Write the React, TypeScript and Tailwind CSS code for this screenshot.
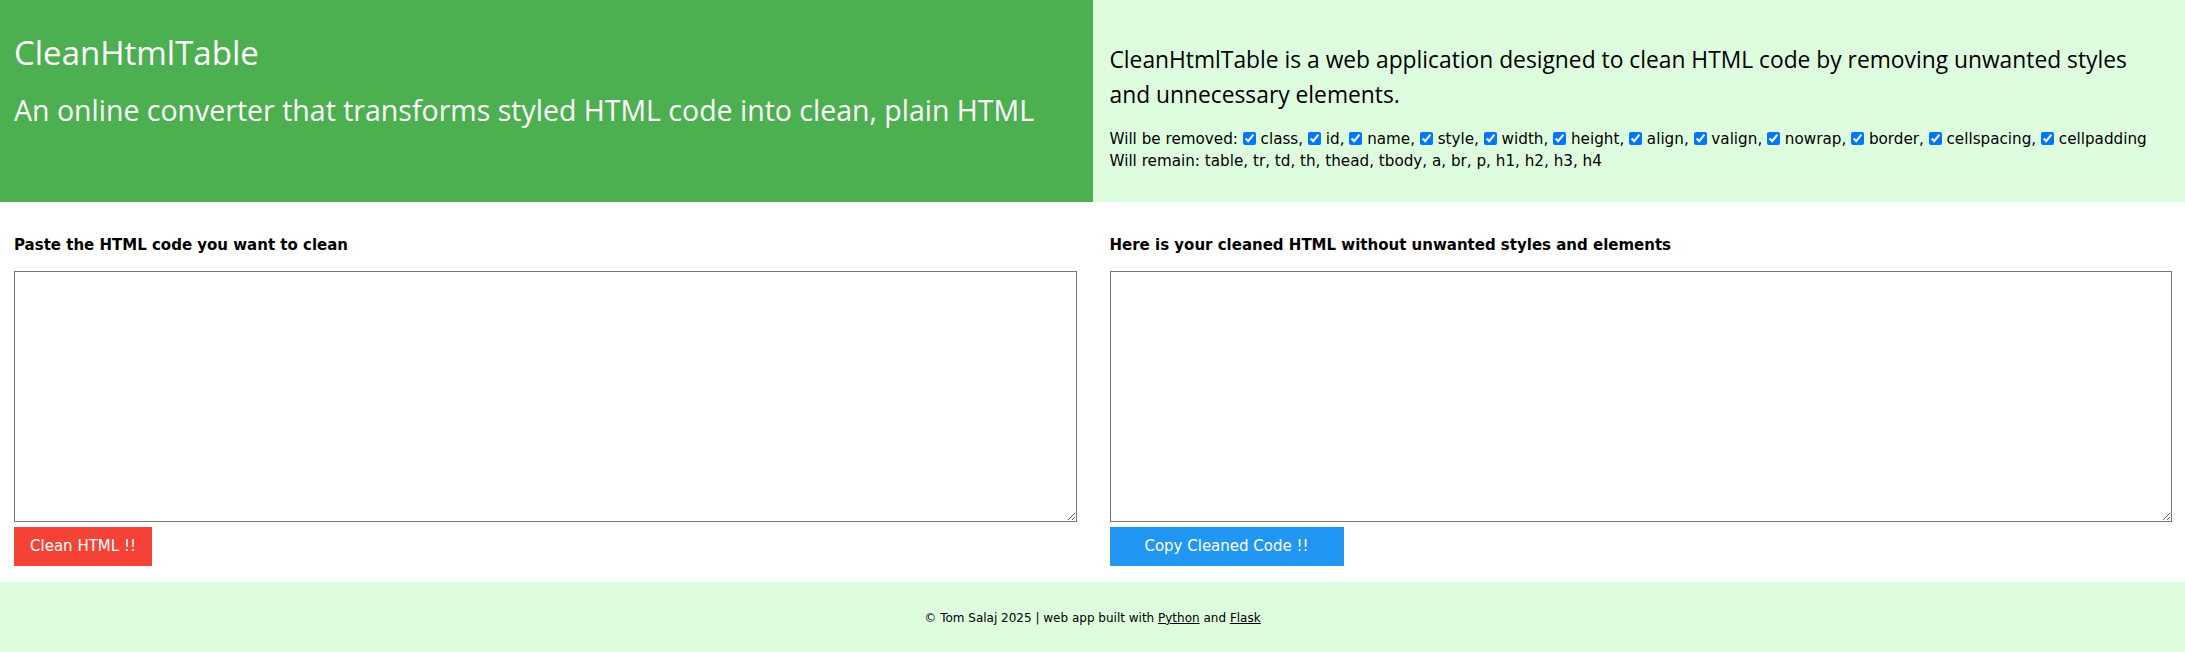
import React from "react";

const removed = [
  "class",
  "id",
  "name",
  "style",
  "width",
  "height",
  "align",
  "valign",
  "nowrap",
  "border",
  "cellspacing",
  "cellpadding",
];

const sans = "font-['Open_Sans','Noto_Sans',sans-serif]";
const verdana = "font-['DejaVu_Sans','Verdana',sans-serif]";

export default function App() {
  return (
    <div className="min-h-[652px] bg-white text-black">
      {/* header */}
      <header className="grid grid-cols-2 h-[202px]">
        <div className={`bg-[#4caf50] text-white pl-[14px] pt-[33px] ${sans}`}>
          <h1 className="text-[33px] leading-[40px] font-normal">CleanHtmlTable</h1>
          <p className="mt-[19px] text-[28.5px] leading-[36px]">
            An online converter that transforms styled HTML code into clean, plain HTML
          </p>
        </div>
        <div className="bg-[#ddfdde] pl-[17px] pr-[14px] pt-[42px]">
          <p className={`text-[22.8px] leading-[35px] ${sans}`}>
            CleanHtmlTable is a web application designed to clean HTML code by removing unwanted styles
            and unnecessary elements.
          </p>
          <div className={`mt-[16px] text-[15.2px] leading-[22px] ${verdana}`}>
            <div className="whitespace-nowrap">
              Will be removed:{" "}
              {removed.map((r, i) => (
                <span key={r}>
                  <input
                    type="checkbox"
                    defaultChecked
                    className="w-[13px] h-[13px] m-0 align-[-1px] accent-[#0075ff]"
                  />{" "}
                  {r}
                  {i < removed.length - 1 ? ", " : ""}
                </span>
              ))}
            </div>
            <div>Will remain: table, tr, td, th, thead, tbody, a, br, p, h1, h2, h3, h4</div>
          </div>
        </div>
      </header>

      {/* editors */}
      <main className={`grid grid-cols-2 pt-[33px] pb-[16px] ${verdana}`}>
        <section className="pl-[14px] pr-[16px]">
          <h3 className="text-[15px] leading-[20px] font-bold">Paste the HTML code you want to clean</h3>
          <textarea className="mt-[16px] block w-full h-[251px] border border-[#767676] bg-white" />
          <button className="mt-[5px] h-[39px] w-[138px] bg-[#f44336] text-white text-[15px]">
            Clean HTML !!
          </button>
        </section>
        <section className="pl-[17px] pr-[13px]">
          <h3 className="text-[15px] leading-[20px] font-bold">
            Here is your cleaned HTML without unwanted styles and elements
          </h3>
          <textarea className="mt-[16px] block w-full h-[251px] border border-[#767676] bg-white" />
          <button className="mt-[5px] h-[39px] w-[234px] bg-[#2196f3] text-white text-[15px]">
            Copy Cleaned Code !!
          </button>
        </section>
      </main>

      <footer className={`bg-[#ddfdde] h-[71px] flex items-center justify-center text-[12px] ${verdana}`}>
        <span>
          © Tom Salaj 2025 | web app built with{" "}
          <a href="#" className="underline">
            Python
          </a>{" "}
          and{" "}
          <a href="#" className="underline">
            Flask
          </a>
        </span>
      </footer>
    </div>
  );
}
